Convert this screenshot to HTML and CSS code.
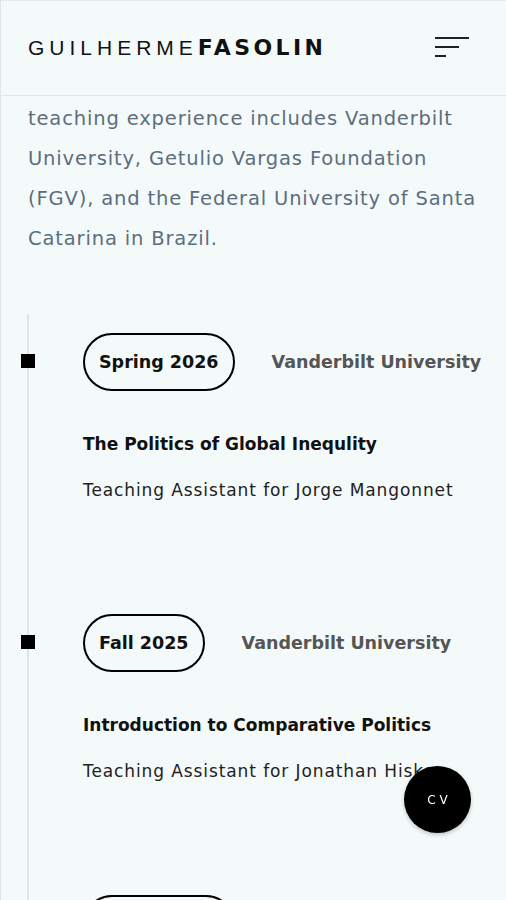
FILE: index.html
```html
<!DOCTYPE html>
<html>
	<head>
		<meta charset="utf-8" />
		<title>Guilherme Fasolin</title>
		<link rel="stylesheet" href="styles.css">
	</head>
	<body>
	<div class="page">
		<div class="header">
			<div class="logo"><span class="light">GUILHERME</span><span class="bold">FASOLIN</span></div>
			<a href="#" class="menu">
				<span class="l1"></span>
				<span class="l2"></span>
				<span class="l3"></span>
			</a>
		</div>

		<p class="intro">teaching experience includes Vanderbilt University, Getulio Vargas Foundation (FGV), and the Federal University of Santa Catarina in Brazil.</p>

		<div class="timeline">
			<div class="item">
				<div class="item-head">
					<span class="dot"></span>
					<span class="pill">Spring 2026</span>
					<span class="place">Vanderbilt University</span>
				</div>
				<h3 class="course">The Politics of Global Inequlity</h3>
				<p class="role">Teaching Assistant for Jorge Mangonnet</p>
			</div>
			<div class="item">
				<div class="item-head">
					<span class="dot"></span>
					<span class="pill">Fall 2025</span>
					<span class="place">Vanderbilt University</span>
				</div>
				<h3 class="course">Introduction to Comparative Politics</h3>
				<p class="role">Teaching Assistant for Jonathan Hiskey</p>
			</div>
			<div class="item">
				<div class="item-head">
					<span class="dot"></span>
					<span class="pill">Spring 2025</span>
					<span class="place">Vanderbilt University</span>
				</div>
			</div>
		</div>
	</div>
	<a href="#" class="cv">CV</a>
	</body>
</html>
```

FILE: styles.css
```css
*{margin: 0;padding: 0;box-sizing: border-box;}
html,body{height: 100%;overflow: hidden;}
body{background: #f4f9fa;font-family: "DejaVu Sans", sans-serif;color: #111;}
.page{border-left: 1px solid #dde6ec;min-height: 100%;}
a{text-decoration: none;color: inherit;}

.header{height: 96px;border-bottom: 1px solid #dde6ec;border-top: 1px solid #e4ebef;display: flex;align-items: center;justify-content: space-between;padding: 0 37px 0 27px;}
.logo{font-size: 21px;line-height: 1;white-space: nowrap;}
.logo .light{font-weight: normal;letter-spacing: 5px;font-family: "Liberation Sans", sans-serif;}
.logo .bold{font-weight: bold;letter-spacing: 3.4px;font-size: 22px;}
.menu{display: flex;flex-direction: column;width: 34px;gap: 7px;margin-top: -2px;}
.menu span{display: block;height: 2px;background: #222;}
.menu .l1{width: 34px;}
.menu .l2{width: 24px;}
.menu .l3{width: 11px;}

.intro{font-size: 19.5px;letter-spacing: 0.85px;line-height: 40px;color: #5c6e7e;padding: 3px 27px 0;margin-bottom: 55px;}

.timeline{border-left: 2px solid #dde6ec;margin-left: 26px;padding-top: 19px;}
.item{padding-left: 54px;height: 281px;}
.item-head{display: flex;align-items: center;position: relative;}
.dot{position: absolute;left: -62px;top: 21px;width: 14px;height: 14px;background: #000;}
.pill{display: inline-block;height: 58px;line-height: 54px;padding: 0 14px;border: 2px solid #000;border-radius: 29px;font-weight: bold;font-size: 17.5px;}
.place{margin-left: 37px;font-weight: bold;font-size: 17.5px;color: #555;}
.course{font-size: 17px;font-weight: bold;margin-top: 43px;line-height: 20px;}
.role{font-size: 17px;letter-spacing: 0.9px;margin-top: 26px;line-height: 20px;color: #222;}

.cv{position: fixed;left: 404px;top: 766px;width: 67px;height: 67px;border-radius: 50%;background: #000;color: #fff;font-size: 12px;letter-spacing: 4px;display: flex;align-items: center;justify-content: center;padding-left: 4px;box-shadow: 0 2px 4px rgba(0,0,0,0.2);}
```
